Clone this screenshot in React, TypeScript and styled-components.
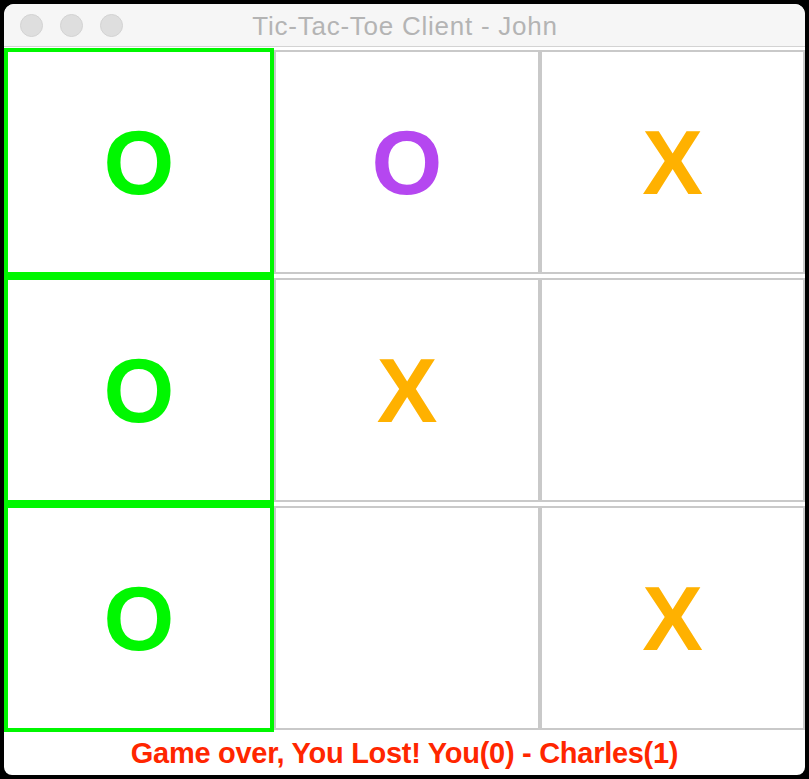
import React from "react";
import styled, { createGlobalStyle } from "styled-components";

const Global = createGlobalStyle`
  html, body { margin: 0; padding: 0; background: #000; }
  body { width: 809px; height: 779px; overflow: hidden; }
`;

const Screen = styled.div`
  width: 809px;
  height: 779px;
  padding: 4px;
  box-sizing: border-box;
  background: #000;
`;

const Window = styled.div`
  width: 801px;
  height: 771px;
  display: flex;
  flex-direction: column;
  background: #fff;
  border-radius: 10px 10px 8px 8px;
  overflow: hidden;
`;

const TitleBar = styled.div`
  height: 42px;
  flex: none;
  position: relative;
  display: flex;
  align-items: center;
  justify-content: center;
  background: #f6f6f6;
  border-bottom: 1px solid #d3d3d3;
`;

const Lights = styled.div`
  position: absolute;
  left: 16px;
  top: 10px;
  display: flex;
  gap: 17px;
`;

const Light = styled.span`
  width: 21px;
  height: 21px;
  border-radius: 50%;
  background: #dedede;
  border: 1px solid #d2d2d2;
`;

const Title = styled.div`
  font-family: "Liberation Sans", Arial, sans-serif;
  font-size: 26px;
  letter-spacing: 0.75px;
  color: #b4b4b4;
  margin-left: 1px;
  margin-top: 2px;
`;

const Board = styled.div`
  margin-top: 1px;
  display: grid;
  grid-template-columns: 270px 266px 265px;
  grid-template-rows: repeat(3, 228px);
  flex: none;
`;

const Cell = styled.div<{ $win: boolean }>`
  box-sizing: border-box;
  display: flex;
  align-items: center;
  justify-content: center;
  margin: ${(p) => (p.$win ? "0" : "2px 0")};
  border: ${(p) => (p.$win ? "4px solid #00f700" : "2px solid #c9c9c9")};
  background: #fff;
`;

const Mark = styled.span<{ $color: string }>`
  font-family: "Liberation Sans", Arial, sans-serif;
  font-weight: bold;
  font-size: 91px;
  line-height: 1;
  color: ${(p) => p.$color};
`;

const Status = styled.div`
  flex: 1;
  display: flex;
  align-items: center;
  justify-content: center;
  font-family: "Liberation Sans", Arial, sans-serif;
  font-weight: bold;
  font-size: 29px;
  letter-spacing: -0.28px;
  color: #ff2600;
  padding-bottom: 1px;
`;

type Sym = { ch: string; color: string } | null;

const GREEN = "#00f700";
const PURPLE = "#b547f0";
const ORANGE = "#ffb100";

const cells: { sym: Sym; win: boolean }[] = [
  { sym: { ch: "O", color: GREEN }, win: true },
  { sym: { ch: "O", color: PURPLE }, win: false },
  { sym: { ch: "X", color: ORANGE }, win: false },
  { sym: { ch: "O", color: GREEN }, win: true },
  { sym: { ch: "X", color: ORANGE }, win: false },
  { sym: null, win: false },
  { sym: { ch: "O", color: GREEN }, win: true },
  { sym: null, win: false },
  { sym: { ch: "X", color: ORANGE }, win: false },
];

export default function App() {
  return (
    <Screen>
      <Global />
      <Window>
        <TitleBar>
          <Lights>
            <Light />
            <Light />
            <Light />
          </Lights>
          <Title>Tic-Tac-Toe Client - John</Title>
        </TitleBar>
        <Board>
          {cells.map((c, i) => (
            <Cell key={i} $win={c.win}>
              {c.sym && <Mark $color={c.sym.color}>{c.sym.ch}</Mark>}
            </Cell>
          ))}
        </Board>
        <Status>Game over, You Lost! You(0) - Charles(1)</Status>
      </Window>
    </Screen>
  );
}
